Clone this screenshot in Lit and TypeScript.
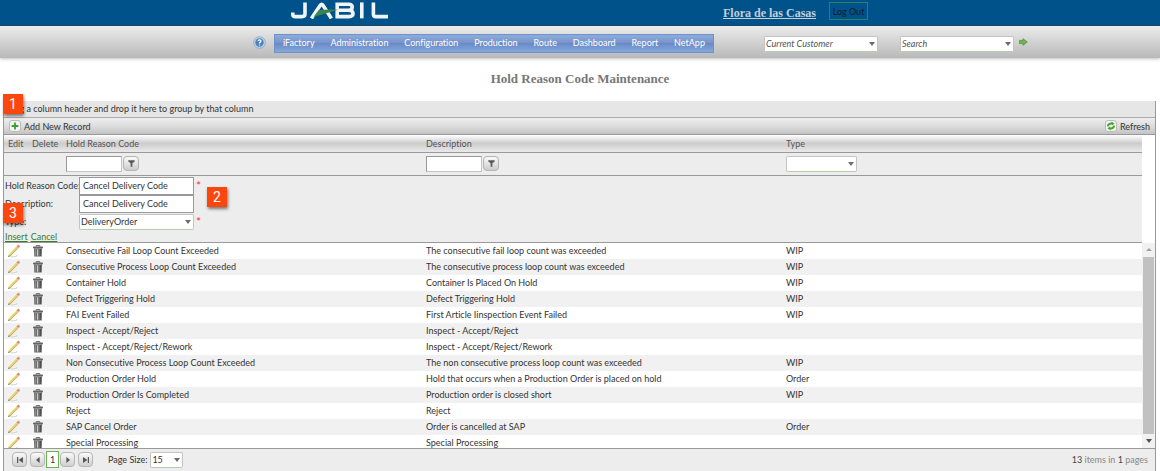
import { LitElement, html, css, svg } from "lit";
import { customElement, property } from "lit/decorators.js";

type Reason = [code: string, description: string, type: string];

const MENU = ["iFactory", "Administration", "Configuration", "Production", "Route", "Dashboard", "Report", "NetApp"];

const REASONS: Reason[] = [
  ["Consecutive Fail Loop Count Exceeded", "The consecutive fail loop count was exceeded", "WIP"],
  ["Consecutive Process Loop Count Exceeded", "The consecutive process loop count was exceeded", "WIP"],
  ["Container Hold", "Container Is Placed On Hold", "WIP"],
  ["Defect Triggering Hold", "Defect Triggering Hold", "WIP"],
  ["FAI Event Failed", "First Article Iinspection Event Failed", "WIP"],
  ["Inspect - Accept/Reject", "Inspect - Accept/Reject", ""],
  ["Inspect - Accept/Reject/Rework", "Inspect - Accept/Reject/Rework", ""],
  ["Non Consecutive Process Loop Count Exceeded", "The non consecutive process loop count was exceeded", "WIP"],
  ["Production Order Hold", "Hold that occurs when a Production Order is placed on hold", "Order"],
  ["Production Order Is Completed", "Production order is closed short", "WIP"],
  ["Reject", "Reject", ""],
  ["SAP Cancel Order", "Order is cancelled at SAP", "Order"],
  ["Special Processing", "Special Processing", ""],
];

const base = css`
  *, *::before, *::after { box-sizing: border-box; }
  button, input, select { font: inherit; color: inherit; margin: 0; }
  button { cursor: pointer; padding: 0; border: 0; background: none; }
  svg { display: block; flex: none; }
`;

const pencil = html`<svg width="14" height="14" viewBox="0 0 14 14" aria-hidden="true">
  <path d="M3 12.8 L8 12.4 L9.5 11.2" stroke="#dcdcdc" stroke-width="1.2" fill="none"/>
  <path d="M1.4 11.8 L9.8 3" stroke="#bfa550" stroke-width="2.3"/>
  <path d="M1.4 11.3 L9.6 2.7" stroke="#f0d96c" stroke-width="1.4"/>
  <path d="M0 13.1 L.7 11.2 L2.2 12.5Z" fill="#77716a"/>
  <path d="M9.6 3.1 L11.2 1.4" stroke="#ea8386" stroke-width="2.7"/>
</svg>`;

const trash = html`<svg width="12" height="12" viewBox="0 0 12 12" aria-hidden="true">
  <path d="M4.2 1.6 V.6 H7.8 V1.6" fill="none" stroke="#666"/>
  <rect x="1" y="1.4" width="10" height="2.1" rx=".8" fill="#666"/>
  <path d="M2 3.4 H10 L9.7 11.6 H2.3Z" fill="#6b6b6b"/>
  <path d="M3.6 4.2 V10.8" stroke="#8f8f8f"/>
  <path d="M5.6 4.2 V10.8" stroke="#c8c8c8" stroke-width="1.2"/>
  <path d="M8.6 4.2 V10.8" stroke="#4c4c4c"/>
</svg>`;

const funnel = html`<svg width="7" height="7" viewBox="0 0 7 7" aria-hidden="true">
  <path d="M0.3 0.3 H6.7 V1.6 L4.4 3.2 V6.8 H2.6 V3.2 L0.3 1.6Z" fill="#5a5a5a"/></svg>`;

const PAGER_PATHS: Record<string, ReturnType<typeof svg>> = {
  First: svg`<path d="M1 1V7H2.2V1Z M7 1V7L2.6 4Z"/>`,
  Previous: svg`<path d="M5.6 1V7L2 4Z"/>`,
  Next: svg`<path d="M2.4 1V7L6 4Z"/>`,
  Last: svg`<path d="M1 1V7L5.4 4Z M5.8 1V7H7V1Z"/>`,
};

@customElement("combo-box")
export class ComboBox extends LitElement {
  @property() label = "";
  @property() value = "";
  @property({ type: Boolean }) hint = false;

  static styles = [base, css`
    :host { display: block; position: relative; font-size: 9px; color: #333; }
    select {
      appearance: none; display: block; width: 100%; height: 16px; padding: 0 14px 0 1px;
      border: 1px solid #c4c4c4; border-bottom-color: #b4cfaa; border-radius: 2px;
      background: #fff; line-height: 14px; outline: 0;
    }
    .hint { font-style: italic; color: #555; }
    .arrow {
      position: absolute; right: 3px; top: 6px; pointer-events: none;
      border: 3px solid transparent; border-top: 4px solid #6c6c6c; border-bottom: 0;
    }
  `];

  render() {
    return html`<select class=${this.hint ? "hint" : ""} aria-label=${this.label}>
      <option>${this.value}</option></select><span class="arrow"></span>`;
  }
}

@customElement("site-header")
export class SiteHeader extends LitElement {
  static styles = [base, css`
    :host { display: block; font-size: 9px; }
    .brand {
      display: flex; align-items: center; height: 26px; padding-left: 25%;
      background: #00528a; border-bottom: 1px solid #174a6e;
    }
    .logo { margin-top: -4px; }
    .user {
      margin-left: 334px; font: bold 12px/16px "Liberation Serif", serif; color: #c3ced6;
    }
    .logout {
      margin: -3px 0 0 13px; width: 39px; height: 18px; border: 1px solid #2d8063; color: #0b1c28;
    }
    .tools {
      display: flex; align-items: center; height: 32px; padding-left: 253px;
      background: linear-gradient(#ececec, #d2d2d2 50%, #b9b9b9);
      box-shadow: 0 1px 3px rgba(0, 0, 0, .25);
    }
    nav {
      display: flex; justify-content: space-between; width: 440px; margin: 2px 0 0 8px; height: 19px;
      border: 1px solid #6e92cb; padding: 0 8px;
      background: linear-gradient(#8dabdb, #7795cc 45%, #6a8ac6 50%, #86a8da);
    }
    nav a { line-height: 16px; color: #fff; text-decoration: none; }
    combo-box { width: 114px; margin: 3px 0 0 22px; }
    combo-box.first { margin-left: 50px; }
    .go { margin-left: 5px; }
  `];

  render() {
    return html`
      <div class="brand">
        <svg class="logo" width="99" height="17" viewBox="0 0 99 17" role="img" aria-label="Jabil">
          <g fill="none" stroke="#f1f4f6" stroke-width="3.6">
            <path d="M15 .4 V12 Q15 14.6 12 14.6 H5.6 Q2.8 14.6 2.8 12.4 V10.4"/>
            <path d="M21.4 16.4 L30.4 3 Q31.6 1.4 32.8 3 L41.4 16.4"/>
            <path d="M47.2 2.3 H58.6 Q62.2 2.3 62.2 5 Q62.2 8.2 59 8.3 H47.2 M59 8.3 Q63 8.6 63 11.6 Q63 14.6 59 14.6 H47.2 V.5"/>
            <path d="M71.8 .4 V16.4"/>
            <path d="M83.4 .4 V12.2 Q83.4 14.6 86 14.6 H98"/>
          </g>
          <path d="M23.5 15 L28.8 8 Q39 7.2 48 7.8 Q36 11.4 23.5 15Z" fill="#3a8450"/>
        </svg>
        <a class="user" href="#user">Flora de las Casas</a>
        <button class="logout">Log Out</button>
      </div>
      <div class="tools">
        <svg width="13" height="13" viewBox="0 0 13 13" role="img" aria-label="Help">
          <circle cx="6.5" cy="6.5" r="5.8" fill="#c0d4ea" stroke="#93aeca"/>
          <circle cx="6.5" cy="6.5" r="4.2" fill="#4f82b9"/>
          <path d="M5 5.2 Q5.2 3.9 6.5 3.9 Q8 3.9 8 5.1 Q8 6 6.6 6.6 V7.4 M6.6 8.4 V9.5" fill="none" stroke="#fff" stroke-width="1.2"/>
        </svg>
        <nav>${MENU.map((m) => html`<a href="#${m}">${m}</a>`)}</nav>
        <combo-box class="first" hint label="Customer" value="Current Customer"></combo-box>
        <combo-box hint label="Search" value="Search"></combo-box>
        <button class="go" aria-label="Go"><svg width="9" height="8" viewBox="0 0 9 8">
          <path d="M.6 2.4 H4 V.7 L8.3 4 L4 7.3 V5.6 H.6Z" fill="#72b357" stroke="#4f963b" stroke-width=".8"/></svg></button>
      </div>`;
  }
}

@customElement("reason-grid")
export class ReasonGrid extends LitElement {
  static styles = [base, css`
    :host {
      display: block; margin: 0 4px 0 3px; border: 1px solid #999; border-top: 0; border-bottom: 0;
      font-size: 9px; color: #333; background: #fff;
    }
    .group { position: relative; height: 17px; padding-left: 1px; line-height: 15px; background: #e6e6e6; border-bottom: 1px solid #aaa; }
    .callout {
      position: absolute; left: -1px; width: 20px; height: 20px; background: #fb470d; color: #fff;
      font: 14px/20px Roboto, sans-serif; text-align: center; box-shadow: 1px 2px 3px rgba(0, 0, 0, .5);
    }
    .one { top: -7px; }
    .two { left: 203px; top: 11px; }
    .three { top: 27px; }
    .commands {
      display: flex; justify-content: space-between; align-items: center; height: 17px; padding: 0 5px;
      background: linear-gradient(#eee, #ddd 50%, #c3c3c3); border-bottom: 1px solid #999;
    }
    .commands button { display: flex; align-items: center; gap: 3px; line-height: 15px; }
    .chip { width: 12px; height: 12px; border: 1px solid #bbb; border-radius: 3px; background: #f4f4f4; }
    .lead { margin-right: 13px; }
    table { width: 100%; table-layout: fixed; border-collapse: collapse; }
    .edit { width: 24px; }
    .delete { width: 34px; }
    th, td { padding: 0 0 0 4px; text-align: left; font-weight: normal; white-space: nowrap; }
    .head th { height: 17px; color: #555; background: linear-gradient(#fff, #ccc 50%, #eaeaea); border-bottom: 1px solid #999; }
    .head td { height: 23px; background: #ededed; border-bottom: 1px solid #999; }
    .filter { display: flex; align-items: center; gap: 1px; }
    .filter input { width: 56px; height: 16px; border: 1px solid #c4c4c4; border-top-color: #999; border-left-color: #999; background: #fff; }
    .filter button {
      display: grid; place-items: center; width: 16px; height: 15px;
      border: 1px solid #b4b4b4; border-radius: 4px; background: linear-gradient(#fafafa, #ccc);
    }
    .filter combo-box { width: 71px; }
    .form { position: relative; margin-right: 13px; padding: 1px 1px 0; height: 67px; background: #ededed; border-bottom: 1px solid #999; }
    .field { display: grid; grid-template-columns: 74px 115px auto; align-items: center; height: 18px; line-height: 15px; white-space: nowrap; }
    .field input { width: 100%; height: 18px; padding: 0 3px; border: 1px solid #999; background: #fff; }
    .req { padding-left: 2px; color: #f33; font-size: 12px; line-height: 12px; }
    .links { display: flex; gap: 3px; height: 12px; line-height: 12px; }
    .links a { color: #3c7a30; }
    .scroll { display: grid; grid-template-columns: 1fr 13px; max-height: 205px; overflow: hidden; }
    .body td { height: 16px; line-height: 15px; }
    .body tr:nth-child(even) { background: #f1f1f1; }
    .body button { display: block; }
    .bar { display: grid; grid-template-rows: 14px 1fr 14px; justify-items: center; align-items: center; height: 205px; background: #f1f1f1; }
    .thumb { width: 11px; height: 100%; background: #c1c1c1; }
    .tip { border: 3px solid transparent; }
    .up { border-bottom: 3px solid #a3a3a3; border-top: 0; }
    .down { border-top: 4px solid #505050; border-bottom: 0; }
    .pager { display: flex; align-items: center; gap: 3px; height: 23px; padding: 0 7px 0 8px; background: #ededed; border-top: 1px solid #999; }
    .pager button { display: grid; place-items: center; width: 15px; height: 15px; border: 1px solid #b5b5b5; border-radius: 4px; background: linear-gradient(#fafafa, #cfcfcf); }
    .pager button.current { width: 13px; height: 17px; margin: 0 -2px; border: 1px solid #67b552; border-radius: 0; background: #fff; }
    .pager label { margin-left: 12px; }
    .pager combo-box { width: 33px; }
    .total { margin-left: auto; color: #888; }
    .total b { font-weight: normal; color: #444; }
  `];

  private cols = html`<colgroup><col class="edit"><col class="delete"><col><col><col></colgroup>`;

  private pageButton(name: string) {
    return html`<button aria-label="${name} page"><svg width="8" height="8" viewBox="0 0 8 8" fill="#555">${PAGER_PATHS[name]}</svg></button>`;
  }

  private textFilter(name: string) {
    return html`<div class="filter"><input aria-label="Filter ${name}"><button aria-label="Filter by ${name}">${funnel}</button></div>`;
  }

  render() {
    return html`
      <div class="group">Drag a column header and drop it here to group by that column<span class="callout one">1</span></div>
      <div class="commands">
        <button><svg class="chip" viewBox="0 0 10 10"><path d="M5 1.6V8.4M1.6 5H8.4" stroke="#3f9c2e" stroke-width="1.8"/></svg>Add New Record</button>
        <button><svg class="chip" viewBox="0 0 10 10"><g fill="none" stroke="#4ba32f" stroke-width="2"><path d="M1.8 5.4 Q2.4 2.2 6 2.6"/><path d="M8.2 4.6 Q7.6 7.8 4 7.4"/></g><path d="M5.6 .6L8.6 2.8L5.8 4.6ZM4.4 9.4L1.4 7.2L4.2 5.4Z" fill="#4ba32f"/></svg>Refresh</button>
      </div>
      <div class="lead">
        <table class="head">${this.cols}
          <thead>
            <tr><th>Edit</th><th>Delete</th><th>Hold Reason Code</th><th>Description</th><th>Type</th></tr>
          </thead>
          <tbody>
            <tr><td></td><td></td><td>${this.textFilter("Hold Reason Code")}</td><td>${this.textFilter("Description")}</td>
              <td><div class="filter"><combo-box label="Filter type"></combo-box></div></td></tr>
          </tbody>
        </table>
      </div>
      <form class="form">
        <div class="field"><label for="code">Hold Reason Code:</label><input id="code" .value=${"Cancel Delivery Code"}><span class="req">*</span></div>
        <div class="field"><label for="desc">Description:</label><input id="desc" .value=${"Cancel Delivery Code"}></div>
        <div class="field"><label for="type">Type:</label><combo-box id="type" label="Type" value="DeliveryOrder"></combo-box><span class="req">*</span></div>
        <div class="links"><a href="#insert">Insert</a><a href="#cancel">Cancel</a></div>
        <span class="callout two">2</span><span class="callout three">3</span>
      </form>
      <div class="scroll">
        <table class="body">${this.cols}
          <tbody>${REASONS.map(([code, description, type]) => html`<tr>
            <td><button aria-label="Edit ${code}">${pencil}</button></td>
            <td><button aria-label="Delete ${code}">${trash}</button></td>
            <td>${code}</td><td>${description}</td><td>${type}</td></tr>`)}</tbody>
        </table>
        <div class="bar"><span class="tip up"></span><span class="thumb"></span><span class="tip down"></span></div>
      </div>
      <div class="pager">
        ${this.pageButton("First")}${this.pageButton("Previous")}
        <button class="current">1</button>
        ${this.pageButton("Next")}${this.pageButton("Last")}
        <label>Page Size:</label><combo-box label="Page Size" value="15"></combo-box>
        <span class="total"><b>13</b> items in <b>1</b> pages</span>
      </div>`;
  }
}

@customElement("app-root")
export class AppRoot extends LitElement {
  static styles = [base, css`
    :host {
      display: block; background: #fff; font-family: Lato, "Noto Sans", sans-serif;
      font-variant-ligatures: none;
    }
    h1 { margin: 0; padding: 13px 0 14px; text-align: center; font: bold 13px/16px "Liberation Serif", serif; color: #777; }
  `];

  render() {
    return html`<site-header></site-header>
      <main><h1>Hold Reason Code Maintenance</h1><reason-grid></reason-grid></main>`;
  }
}
